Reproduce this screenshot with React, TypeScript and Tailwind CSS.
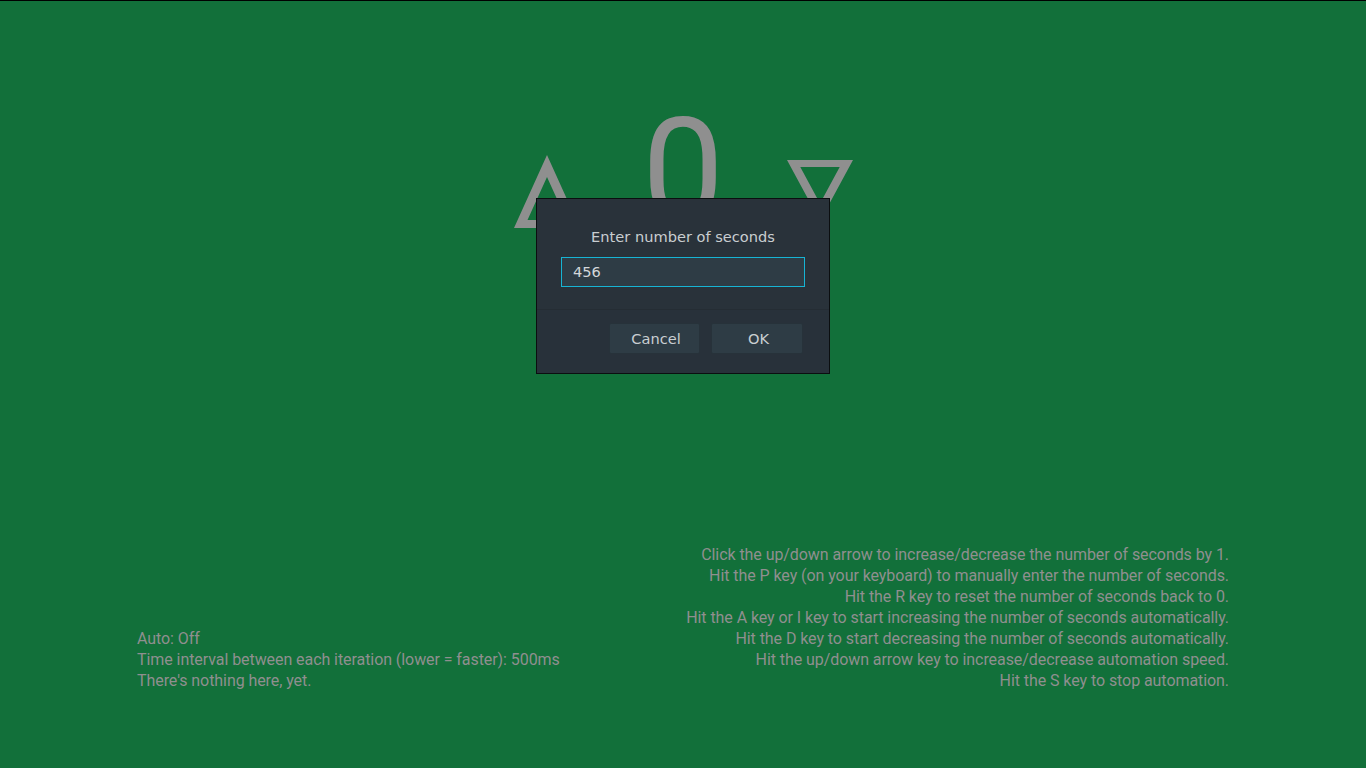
const helpLines = [
  "Click the up/down arrow to increase/decrease the number of seconds by 1.",
  "Hit the P key (on your keyboard) to manually enter the number of seconds.",
  "Hit the R key to reset the number of seconds back to 0.",
  "Hit the A key or I key to start increasing the number of seconds automatically.",
  "Hit the D key to start decreasing the number of seconds automatically.",
  "Hit the up/down arrow key to increase/decrease automation speed.",
  "Hit the S key to stop automation.",
];

export default function App() {
  return (
    <div className="relative flex h-[768px] w-full flex-col overflow-hidden border-t border-black bg-[#12703a] font-['Roboto',sans-serif] text-[#8f8f8f]">
      <div className="flex justify-center pt-[99px]">
        <div className="w-[66px] pt-[55px]">
          <svg width="66" height="74" viewBox="0 0 66 74" className="block">
            <path
              fill="#8f8f8f"
              fillRule="evenodd"
              d="M33 0 L66 73 L0 73 Z M33 22 L13.5 65 L52.5 65 Z"
            />
          </svg>
        </div>
        <div className="w-[207px] text-center text-[146px] leading-none">0</div>
        <div className="w-[66px] pt-[60px]">
          <svg width="66" height="62" viewBox="0 0 66 62" className="block">
            <path
              fill="#8f8f8f"
              fillRule="evenodd"
              d="M0 0 L66 0 L33 61 Z M13.3 7 L52.7 7 L33 43.4 Z"
            />
          </svg>
        </div>
      </div>

      <div className="mt-auto flex items-end justify-between px-[137px] pb-[77px] text-[16px] leading-[21px] tracking-[-0.07px]">
        <div>
          <p>Auto: Off</p>
          <p>Time interval between each iteration (lower = faster): 500ms</p>
          <p>There's nothing here, yet.</p>
        </div>
        <div className="text-right">
          {helpLines.map((line) => (
            <p key={line}>{line}</p>
          ))}
        </div>
      </div>

      <PromptDialog />
    </div>
  );
}

function PromptDialog() {
  return (
    <div className="absolute left-[536px] top-[197px] w-[294px] border border-[#0b0e10] bg-[#29323a] font-['DejaVu_Sans',sans-serif] text-[14.6px] text-[#c9ced1]">
      <div className="px-[24px] pt-[29px] pb-[22px]">
        <p className="text-center leading-[18px]">Enter number of seconds</p>
        <div className="mt-[11px] flex h-[30px] items-center border border-[#17b4d4] bg-[#2e3c45] px-[11px] text-[#d3d7da]">
          456
        </div>
      </div>
      <div className="flex justify-end gap-[11px] border-t border-[#252d34] bg-[#28313a] pt-[13px] pr-[26px] pb-[19px]">
        <button className="h-[31px] w-[91px] rounded-[2px] border border-[#27323a] bg-[#2e3c45] pl-[3px] leading-[28px] text-[#c9ced1]">
          Cancel
        </button>
        <button className="h-[31px] w-[92px] rounded-[2px] border border-[#27323a] bg-[#2e3c45] pl-[3px] leading-[28px] text-[#c9ced1]">
          OK
        </button>
      </div>
    </div>
  );
}
